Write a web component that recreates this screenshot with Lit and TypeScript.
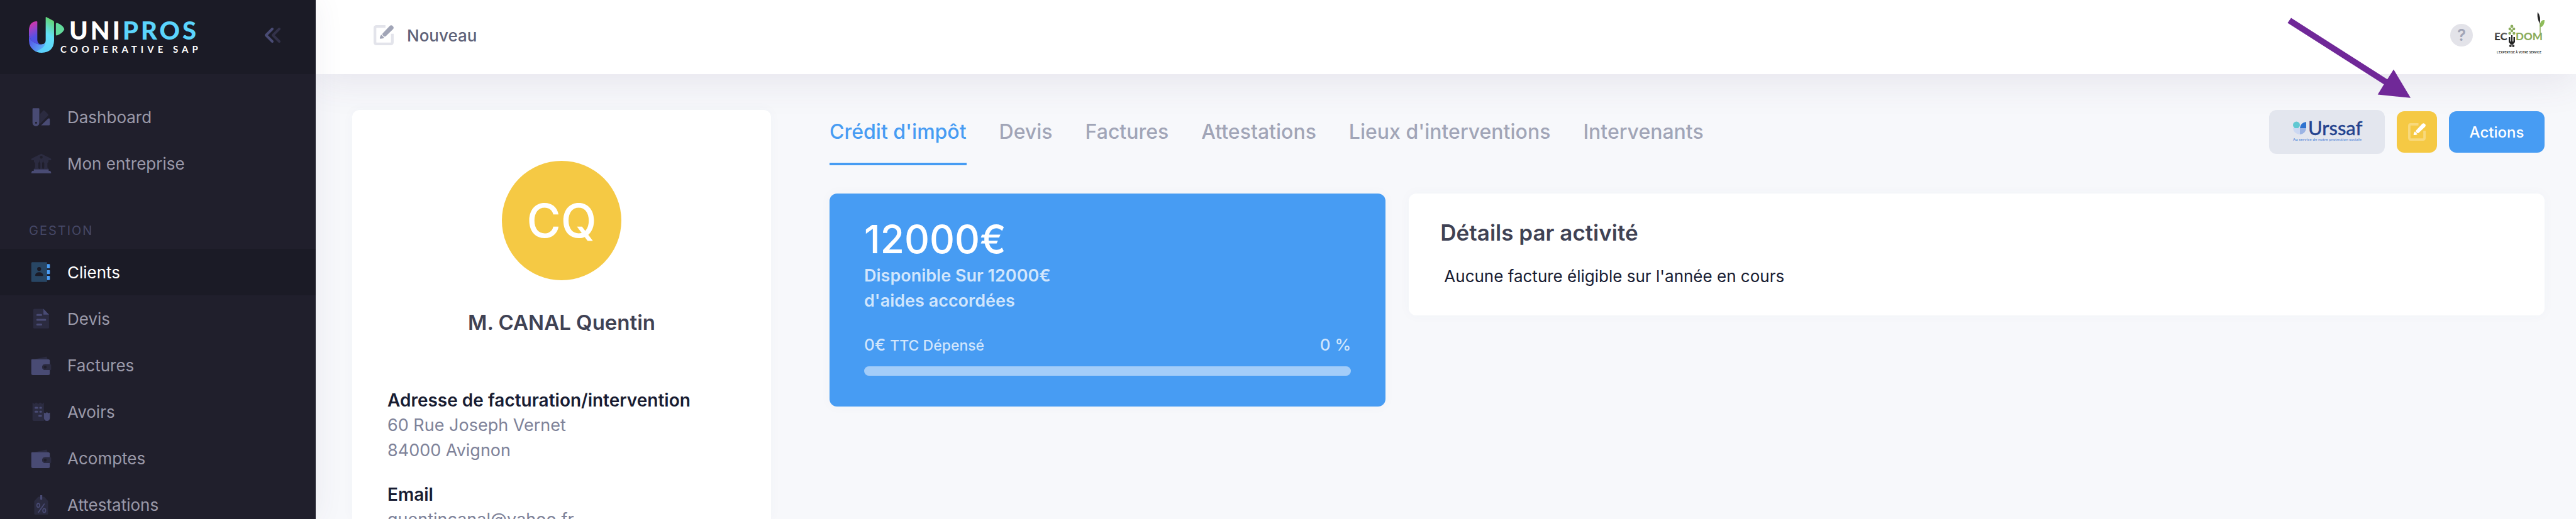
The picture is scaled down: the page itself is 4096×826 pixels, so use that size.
import { LitElement, html, css, svg, nothing } from "lit";
import { customElement, property } from "lit/decorators.js";
import { classMap } from "lit/directives/class-map.js";

const icons: Record<string, unknown> = {
  dashboard: svg`
    <path class="soft" d="M11.9 9 15 5.7Q15.6 5 16.3 5.7L19.9 9.3Q20.5 10 19.9 10.8L11.9 19Z"/>
    <path fill-rule="evenodd" d="M5 3.3H10.4Q11.1 3.3 11.1 4V18A3.45 3.45 0 0 1 4.2 18V4Q4.2 3.3 5 3.3ZM7.8 16.9A1 1 0 1 0 7.8 18.9 1 1 0 1 0 7.8 16.9Z"/>
    <path d="M12.9 20.5 20 13.6H21Q21.6 13.6 21.6 14.3V19.8Q21.6 20.5 21 20.5Z"/>`,
  company: svg`
    <path class="soft" fill-rule="evenodd" d="M13 2.3 22.4 7Q23 7.3 23 8V8.8H20.3V10.5L19.2 11.5V16L20.5 18H15L16 16V11.5L15 10.5V9.2H14.6V10.5L13.9 11.5V16L14.6 18H11.4L12.1 16V11.5L11.4 10.5V9.2H11V10.5L10 11.5V16L11 18H5.5L6.8 16V11.5L5.7 10.5V8.8H3V8Q3 7.3 3.6 7ZM13 4.4A1.4 1.4 0 1 0 13 7.2 1.4 1.4 0 1 0 13 4.4Z"/>
    <path d="M5.5 18H20.5V19.6H22Q23 20.4 23 22H3Q3 20.4 4 19.6H5.5Z"/>`,
  clients: svg`
    <path class="soft" fill-rule="evenodd" d="M4 2H18.8V22H4Q3 22 3 21V3Q3 2 4 2ZM10.9 6.9A2 2 0 1 0 10.9 10.9 2 2 0 1 0 10.9 6.9ZM6.9 15Q7.6 12.1 10.9 12.1T15 15Q15 16 14.2 16H7.7Q6.9 16 6.9 15Z"/>
    <path d="M18.8 4H21Q21.7 4 21.7 4.8V7.4Q21.7 8.2 21 8.2H18.8ZM18.8 9.9H21Q21.7 9.9 21.7 10.7V13.3Q21.7 14.1 21 14.1H18.8ZM18.8 15.8H21Q21.7 15.8 21.7 16.6V19.2Q21.7 20 21 20H18.8Z"/>`,
  quote: svg`
    <path class="soft" d="M6 2.2H15.2L20.8 8V21Q20.8 22 19.8 22H6Q5 22 5 21V3.2Q5 2.2 6 2.2Z"/>
    <path d="M15.2 2.2 20.8 8H15.2Z"/>
    <path class="line" d="M9 8.4H13M9 13.2H17M9 18H13"/>`,
  wallet: svg`
    <path class="soft" d="M6 6.1 18.4 3.5 19.4 6.1Z"/>
    <path d="M3.9 6.1H20Q21.6 6.1 21.6 7.7V11.2H16.8A2.9 2.9 0 0 0 16.8 17H21.6V20.5Q21.6 22.1 20 22.1H4.5Q3 22.1 3 20.5V7Q3 6.1 3.9 6.1Z"/>
    <path class="soft" fill-rule="evenodd" d="M16.8 11.2H22.3Q23 11.2 23 12V16.2Q23 17 22.3 17H16.8A2.9 2.9 0 0 1 16.8 11.2ZM16.9 12.6A1.5 1.5 0 1 0 16.9 15.6 1.5 1.5 0 1 0 16.9 12.6Z"/>`,
  receipt: svg`
    <path class="soft" d="M4.2 2.8 6 4.2 8 2.8 10 4.2 12 2.8 14 4.2 15.7 2.8V21.5H6.2Q4.2 21.5 4.2 19.5Z"/>
    <path class="line" d="M7.2 8.2H9M12 8.2H12.8M7.2 12.2H9M12 12.2H12.8M11 16.2H12.8"/>
    <path d="M15.7 12.9 17 13.8 18.7 12.6 20.3 13.8 21.7 12.9V18.5A3 3 0 0 1 15.7 18.5Z"/>`,
  tag: svg`
    <path class="soft" d="M10 4.1H16L19.9 8.5V21.1Q19.9 22.1 18.9 22.1H7Q6 22.1 6 21.1V8.5Z"/>
    <path d="M12 2.5H14V6.5Q13 8.3 12 6.5Z"/>
    <path class="thin" d="M16 11.5 10.2 19.8M8.6 12.8A1.4 2 0 1 0 11.4 12.8 1.4 2 0 1 0 8.6 12.8M14.6 18A1.4 2 0 1 0 17.4 18 1.4 2 0 1 0 14.6 18"/>`,
};

const editIcon = svg`
  <path class="frame" d="M52 6H13Q6 6 6 13V75Q6 82 13 82H75Q82 82 82 75V38"/>
  <path class="pen" d="M40 36 70 4Q77 -2 84 4T85 18L53 49Q48 52 44 48L40 44Q36 40 40 36ZM34 42 47 56Q40 60 30 60 27 59 27 56 29 46 34 42Z"/>`;

@customElement("nav-item")
class NavItem extends LitElement {
  @property() icon = "";
  @property() label = "";
  @property({ type: Boolean }) active = false;

  static styles = css`
    :host { display: block; }
    .link {
      display: flex; align-items: center; gap: 24px; height: 74px; padding: 0 45px;
      color: #9a99a9; font-size: 26px; text-decoration: none;
    }
    .icon { width: 38px; height: 38px; fill: #494b74; flex: none; }
    .soft { fill: #2b2b40; }
    .line { stroke: #494b74; stroke-width: 1.9; stroke-linecap: round; fill: none; }
    .thin { stroke: #494b74; stroke-width: 1.1; stroke-linecap: round; fill: none; }
    .active { background: #1b1b26; color: #fff; }
    .active .icon { fill: #4a9ef5; }
    .active .soft { fill: #284664; }
  `;

  render() {
    return html`<a href="#" class=${classMap({ link: true, active: this.active })}
      aria-current=${this.active ? "page" : nothing}>
      <svg class="icon" viewBox="0 0 24 24" aria-hidden="true">${icons[this.icon]}</svg>
      <span>${this.label}</span>
    </a>`;
  }
}

@customElement("side-bar")
class SideBar extends LitElement {
  static styles = css`
    :host { display: block; background: #201f2c; overflow: hidden; height: 100%; }
    .brand {
      display: flex; align-items: center; justify-content: space-between;
      box-sizing: border-box; height: 118px; padding: 0 56px 6px 46px; background: #1b1b26;
    }
    .logo { display: block; width: 274px; height: 58px; overflow: visible; }
    .name { font: 900 40px Lato, sans-serif; letter-spacing: 4px; fill: #fff; }
    .name .alt { fill: #5bd5fd; }
    .sub { font: 700 15px Lato, sans-serif; letter-spacing: 6px; fill: #fff; }
    .toggle { border: 0; background: none; padding: 0; display: block; }
    .toggle svg { display: block; width: 26px; height: 26px; }
    .menu { padding-top: 31px; }
    .heading {
      margin: 0; padding: 57px 46px 16px; line-height: 26px;
      font-size: 20px; font-weight: 400; letter-spacing: 2px; color: #464866;
    }
  `;

  render() {
    return html`
      <div class="brand">
        <a href="#" aria-label="Unipros Cooperative SAP">
          <svg class="logo" viewBox="0 0 274 58">
            <defs>
              <linearGradient id="a" x1="0" y1="0" x2="0.3" y2="1">
                <stop offset="0" stop-color="#ec2f9c"/><stop offset=".45" stop-color="#9045cc"/><stop offset=".75" stop-color="#5252e6"/>
              </linearGradient>
              <linearGradient id="b" x1="0.8" y1="0" x2="0.4" y2="1">
                <stop offset="0" stop-color="#62d468"/><stop offset=".45" stop-color="#62e0f8"/><stop offset="1" stop-color="#5bcffc"/>
              </linearGradient>
              <linearGradient id="c" x1="0" y1="0.2" x2="1" y2="0.8">
                <stop offset="0" stop-color="#5550e6"/><stop offset="1" stop-color="#5bb8fa"/>
              </linearGradient>
            </defs>
            <g transform="scale(.3172) translate(-24 -27)">
              <path fill="url(#b)" d="M108 30Q108 26 112 28L146 46Q150 48 150 53V146Q148 204 88 207 62 206 44 190L87 165Q108 165 108 144Z"/>
              <path fill="url(#c)" d="M24 122Q40 162 87 165 100 165 106 155 108 180 60 200 24 184 24 144Z"/>
              <path fill="url(#a)" d="M24 92Q26 52 62 48 66 48 66 52V144Q68 165 87 165 40 164 24 122Z"/>
              <path fill="#62d99c" d="M159 61Q160 56 165 57 190 66 199 82 204 88 199 94 188 112 164 120 159 120 159 116Z"/>
            </g>
            <text class="name" x="64" y="36">UNI<tspan class="alt">PROS</tspan></text>
            <text class="sub" x="50" y="57">COOPERATIVE SAP</text>
          </svg>
        </a>
        <button class="toggle" type="button" aria-label="Replier le menu">
          <svg viewBox="0 0 26 26" fill="none" stroke-width="4" stroke-linecap="round" stroke-linejoin="round">
            <path stroke="#494b74" d="M13 3 3 13 13 23"/><path stroke="#323149" d="M24 3 14 13 24 23"/>
          </svg>
        </button>
      </div>
      <nav class="menu">
        <nav-item icon="dashboard" label="Dashboard"></nav-item>
        <nav-item icon="company" label="Mon entreprise"></nav-item>
        <h2 class="heading">GESTION</h2>
        <nav-item icon="clients" label="Clients" active></nav-item>
        <nav-item icon="quote" label="Devis"></nav-item>
        <nav-item icon="wallet" label="Factures"></nav-item>
        <nav-item icon="receipt" label="Avoirs"></nav-item>
        <nav-item icon="wallet" label="Acomptes"></nav-item>
        <nav-item icon="tag" label="Attestations"></nav-item>
      </nav>`;
  }
}

@customElement("top-bar")
class TopBar extends LitElement {
  static styles = css`
    :host {
      display: flex; align-items: center; justify-content: space-between;
      box-sizing: border-box; height: 118px; padding: 0 50px 6px 92px;
      background: #fff; box-shadow: 0 12px 60px rgba(82, 63, 105, 0.1);
    }
    .new {
      display: flex; align-items: center; gap: 21px; border: 0; padding: 0; background: none;
      font: 500 26px Inter, sans-serif; color: #5e6278;
    }
    .new svg { width: 32px; height: 32px; overflow: visible; }
    .frame { fill: none; stroke: #e3e4eb; stroke-width: 12; }
    .pen { fill: #a1a5b7; }
    .tools { display: flex; align-items: center; gap: 38px; }
    .help {
      width: 36px; height: 36px; border: 0; border-radius: 50%; padding: 0;
      background: #e3e3e9; color: #a1a5b7; font: 600 25px Inter, sans-serif;
    }
    .company { display: block; width: 76px; height: 74px; overflow: visible; }
    .word { font: 900 17px Lato, sans-serif; }
    .motto { font: 500 5px Roboto, sans-serif; fill: #222; }
  `;

  render() {
    return html`
      <button class="new" type="button">
        <svg viewBox="0 0 88 88" aria-hidden="true">${editIcon}</svg>Nouveau
      </button>
      <div class="tools">
        <button class="help" type="button" aria-label="Aide">?</button>
        <a href="#" aria-label="Ecodom">
          <svg class="company" viewBox="0 0 76 74">
            <defs>
              <linearGradient id="k" x1="0" y1="0" x2="0" y2="1">
                <stop offset="0" stop-color="#777"/><stop offset="1" stop-color="#1c1c1c"/>
              </linearGradient>
            </defs>
            <text class="word" x="-4" y="45" fill="url(#k)">EC</text>
            <g fill="#8aac5c">
              <circle cx="24" cy="23" r="2.4"/><circle cx="20.800" cy="27" r="2.200"/><circle cx="27.200" cy="27" r="2.200"/>
              <circle cx="24" cy="30" r="2.200"/><circle cx="20.600" cy="34" r="2.200"/><circle cx="27.400" cy="34" r="2.200"/>
            </g>
            <path fill="#222" d="M19 40H21.500V47H23V37H25V47H26.500V40H29V48L25.500 52H22.500L19 48Z"/>
            <circle cx="21.800" cy="54" r="2" fill="#333"/><circle cx="26.200" cy="54" r="2" fill="#333"/>
            <text class="word" x="30" y="45" fill="#8aac5c">DOM</text>
            <path fill="#222" d="M65 0Q71 8 68 19L66 13Q64 8 65 0Z"/>
            <path fill="#8fbd5a" d="M69 19Q70 12 76 13 76 21 71 24 67 24 69 19Z"/>
            <path stroke="#8aac5c" stroke-width="1.500" d="M69 18V33"/>
            <text class="motto" x="0" y="66">L'EXPERTISE À VOTRE SERVICE</text>
          </svg>
        </a>
      </div>`;
  }
}

@customElement("client-card")
class ClientCard extends LitElement {
  static styles = css`
    :host {
      display: block; box-sizing: border-box; padding: 81px 56px 56px; background: #fff;
      border-radius: 12px 12px 0 0; box-shadow: 0 0 20px rgba(76, 87, 125, 0.03);
      font-size: 27px; line-height: 40px; color: #7e8299;
    }
    .avatar {
      display: flex; align-items: center; justify-content: center; width: 190px; height: 190px;
      margin: 0 auto; border-radius: 50%; background: #f5c944; color: #fff;
      font-size: 74px; font-weight: 500;
    }
    .name { margin: 45px 0 82px; text-align: center; font-size: 33px; line-height: 44px; font-weight: 600; color: #3f4254; }
    .details { margin: 0; }
    .term { font-size: 28px; font-weight: 600; color: #181c32; }
    .value { margin: 0 0 30px; }
  `;

  render() {
    return html`
      <div class="avatar">CQ</div>
      <h1 class="name">M. CANAL Quentin</h1>
      <dl class="details">
        <dt class="term">Adresse de facturation/intervention</dt>
        <dd class="value">60 Rue Joseph Vernet<br>84000 Avignon</dd>
        <dt class="term">Email</dt>
        <dd class="value">quentincanal@yahoo.fr</dd>
      </dl>`;
  }
}

@customElement("client-actions")
class ClientActions extends LitElement {
  static styles = css`
    :host { display: flex; align-items: center; gap: 19px; height: 70px; }
    .btn {
      display: flex; align-items: center; justify-content: center; box-sizing: border-box;
      height: 66px; padding: 0; border: 0; border-radius: 12px; font: 500 24px Inter, sans-serif; color: #fff;
    }
    .urssaf { width: 184px; height: 70px; background: #e3e6ee; }
    .urssaf svg { width: 108px; height: 34px; overflow: visible; }
    .edit { width: 64px; background: #f5c944; }
    .edit svg { width: 28px; height: 28px; overflow: visible; }
    .more { width: 152px; background: #479cf3; }
    .word { font: 400 31px Lato, sans-serif; fill: #24438e; stroke: #24438e; stroke-width: 0.5; }
    .motto { font: 600 6px "Open Sans", sans-serif; fill: #5b8ddb; }
    .frame { fill: none; stroke: #fff; stroke-opacity: 0.3; stroke-width: 12; }
    .pen { fill: #fff; }
  `;

  render() {
    return html`
      <button class="btn urssaf" type="button" aria-label="Urssaf">
        <svg viewBox="0 0 108 34">
          <circle cx="5.500" cy="6" r="5.500" fill="#60c8d2"/>
          <path fill="#2f72cf" d="M21 1V11H11Q12 2 21 1Z"/>
          <path fill="#ccd8f2" d="M0 11H11V21Q1 20 0 11Z"/>
          <path fill="#9cb4e4" d="M11 11H21Q20 20 11 21Z"/>
          <text class="word" x="24" y="22">Urssaf</text>
          <text class="motto" x="0" y="31">Au service de notre protection sociale</text>
        </svg>
      </button>
      <button class="btn edit" type="button" aria-label="Modifier">
        <svg viewBox="0 0 88 88">${editIcon}</svg>
      </button>
      <button class="btn more" type="button">Actions</button>`;
  }
}

@customElement("credit-summary")
class CreditSummary extends LitElement {
  @property({ type: Number }) spent = 0;
  @property({ type: Number }) total = 12000;

  static styles = css`
    :host {
      display: block; padding: 41px 55px 49px; border-radius: 12px; background: #479cf3;
      color: rgba(255, 255, 255, 0.75); box-shadow: 0 0 20px rgba(76, 87, 125, 0.03);
    }
    .amount { margin: 0; font-size: 62px; line-height: 64px; font-weight: 500; color: #fff; }
    .note { margin: 6px 0 32px; font-size: 27px; line-height: 40px; font-weight: 600; }
    .row { display: flex; justify-content: space-between; align-items: baseline; font-size: 26px; line-height: 36px; font-weight: 500; }
    .small { font-size: 23px; }
    .track { height: 15px; margin-top: 15px; border-radius: 8px; overflow: hidden; background: #a3cdf9; }
    .fill { height: 100%; background: #fff; }
  `;

  render() {
    const percent = Math.round((this.spent / this.total) * 100);
    return html`
      <p class="amount">${this.total - this.spent}€</p>
      <p class="note">Disponible Sur ${this.total}€<br>d'aides accordées</p>
      <div class="row">
        <span>${this.spent}€ <span class="small">TTC Dépensé</span></span>
        <span>${percent} %</span>
      </div>
      <div class="track" role="progressbar" aria-valuenow=${percent} aria-label="Crédit dépensé">
        <div class="fill" style="width:${percent}%"></div>
      </div>`;
  }
}

@customElement("activity-details")
class ActivityDetails extends LitElement {
  static styles = css`
    :host {
      display: block; padding: 42px 50px 42px; border-radius: 12px; background: #fff;
      box-shadow: 0 0 20px rgba(76, 87, 125, 0.03);
    }
    .title { margin: 0 0 30px; font-size: 35px; line-height: 40px; font-weight: 600; color: #3f4254; }
    .empty { margin: 0; padding-left: 6px; font-size: 26px; line-height: 40px; color: #181c32; }
  `;

  render() {
    return html`
      <h2 class="title">Détails par activité</h2>
      <p class="empty">Aucune facture éligible sur l'année en cours</p>`;
  }
}

@customElement("app-root")
class AppRoot extends LitElement {
  static styles = css`
    :host {
      display: grid; grid-template-columns: 502px minmax(0, 1fr); height: 100vh; overflow: hidden;
      position: relative; background: #f7f8fb; font-family: Inter, sans-serif;
    }
    .side { z-index: 2; box-shadow: 0 0 44px rgba(82, 63, 105, 0.08); min-height: 0; }
    .page { display: flex; flex-direction: column; min-height: 0; overflow: hidden; }
    .content { flex: 1; display: flex; gap: 93px; padding: 57px 50px 0 58px; min-height: 0; }
    .client { width: 666px; flex: none; }
    .main { flex: 1; min-width: 0; }
    .bar { display: flex; justify-content: space-between; align-items: flex-start; margin-bottom: 45px; }
    .tabs { display: flex; gap: 52px; }
    .tab {
      display: block; padding-bottom: 14px; border-bottom: 4px solid transparent;
      font-size: 32px; line-height: 70px; font-weight: 500; color: #a1a5b7;
      text-decoration: none; white-space: nowrap;
    }
    .current { color: #479cf3; border-color: #479cf3; }
    .cards { display: grid; grid-template-columns: calc((100% + 37px) / 3 - 37px) minmax(0, 1fr); gap: 37px; align-items: start; }
    .pointer { position: absolute; z-index: 3; top: 28px; right: 263px; width: 196px; height: 128px; pointer-events: none; }
  `;

  private tabs = ["Crédit d'impôt", "Devis", "Factures", "Attestations", "Lieux d'interventions", "Intervenants"];

  render() {
    return html`
      <side-bar class="side"></side-bar>
      <div class="page">
        <top-bar></top-bar>
        <div class="content">
          <client-card class="client"></client-card>
          <main class="main">
            <div class="bar">
              <nav class="tabs">
                ${this.tabs.map((t, i) => html`<a href="#" class=${classMap({ tab: true, current: i === 0 })}>${t}</a>`)}
              </nav>
              <client-actions></client-actions>
            </div>
            <div class="cards">
              <credit-summary></credit-summary>
              <activity-details></activity-details>
            </div>
          </main>
        </div>
      </div>
      <svg class="pointer" viewBox="0 0 196 128" aria-hidden="true">
        <path fill="#702898" d="M6 0.500 159 98.300 169 82.400 196 127.800 143.700 122.400 153.600 106.200 0.400 8.500Z"/>
      </svg>`;
  }
}
